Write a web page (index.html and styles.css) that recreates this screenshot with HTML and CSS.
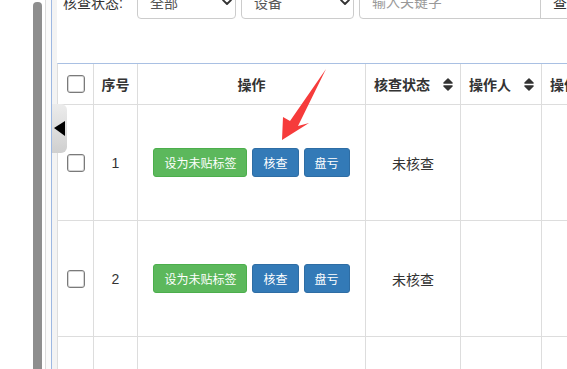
FILE: index.html
```html
<!DOCTYPE html>
<html lang="zh-CN">
<head>
    <meta charset="UTF-8">
    <meta name="viewport" content="width=device-width, initial-scale=1.0">
    <link rel="stylesheet" href="styles.css">
</head>
<body>

    <div class="page">
        <div class="rail">
            <div class="rail-space"></div>
            <div class="scrollbar"></div>
            <div class="rail-gap"></div>
            <div class="rail-line"></div>
            <div class="rail-panel"></div>
            <div class="rail-blue"></div>
            <div class="rail-panel shade"></div>
        </div>

        <div class="main">
            <div class="filters">
                <span class="filter-label">核查状态:</span>
                <div class="select">
                    <span>全部</span>
                    <svg class="chevron" width="10" height="6" viewBox="0 0 10 6"><path d="M1 1 L5 5 L9 1" fill="none" stroke="#333" stroke-width="1.8" stroke-linecap="round" stroke-linejoin="round"/></svg>
                </div>
                <div class="select wide">
                    <span>设备</span>
                    <svg class="chevron" width="10" height="6" viewBox="0 0 10 6"><path d="M1 1 L5 5 L9 1" fill="none" stroke="#333" stroke-width="1.8" stroke-linecap="round" stroke-linejoin="round"/></svg>
                </div>
                <div class="search">
                    <div class="search-input">输入关键字</div>
                    <button class="search-btn">查询</button>
                </div>
            </div>

            <div class="table">
                <div class="row head">
                    <div class="cell"><span class="check"></span></div>
                    <div class="cell">序号</div>
                    <div class="cell">操作</div>
                    <div class="cell sortable">核查状态
                        <svg class="sort" width="12" height="15" viewBox="0 0 12 15"><path d="M2 6 L6 2 L10 6 Z M2 9 L6 13 L10 9 Z" fill="#333" stroke="#333" stroke-width="1.6" stroke-linejoin="round"/></svg>
                    </div>
                    <div class="cell sortable">操作人
                        <svg class="sort" width="12" height="15" viewBox="0 0 12 15"><path d="M2 6 L6 2 L10 6 Z M2 9 L6 13 L10 9 Z" fill="#333" stroke="#333" stroke-width="1.6" stroke-linejoin="round"/></svg>
                    </div>
                    <div class="cell sortable">操作时间</div>
                </div>

                <div class="row">
                    <div class="cell"><span class="check"></span></div>
                    <div class="cell">1</div>
                    <div class="cell actions">
                        <button class="btn green">设为未贴标签</button>
                        <button class="btn blue">核查</button>
                        <button class="btn blue">盘亏</button>
                    </div>
                    <div class="cell">未核查</div>
                    <div class="cell"></div>
                    <div class="cell"></div>
                </div>

                <div class="row">
                    <div class="cell"><span class="check"></span></div>
                    <div class="cell">2</div>
                    <div class="cell actions">
                        <button class="btn green">设为未贴标签</button>
                        <button class="btn blue">核查</button>
                        <button class="btn blue">盘亏</button>
                    </div>
                    <div class="cell">未核查</div>
                    <div class="cell"></div>
                    <div class="cell"></div>
                </div>

                <div class="row">
                    <div class="cell"></div>
                    <div class="cell"></div>
                    <div class="cell"></div>
                    <div class="cell"></div>
                    <div class="cell"></div>
                    <div class="cell"></div>
                </div>
            </div>
        </div>

        <div class="toggle"><span class="toggle-arrow"></span></div>

        <svg class="arrow" width="567" height="369" viewBox="0 0 567 369">
            <polygon points="282,140 283,117 290,121 326,69 298,126 309,123" fill="#f63b3b"/>
        </svg>
    </div>

</body>
</html>
```

FILE: styles.css
```css
* {
    box-sizing: border-box;
}
body {
    margin: 0;
    font-family: "Liberation Sans", "Noto Sans CJK SC", sans-serif;
    font-size: 14px;
    color: #333;
    background-color: #fff;
    overflow: hidden;
}
.page {
    display: flex;
    position: relative;
    height: 369px;
    overflow: hidden;
}

/* left strip with the scrollbar */
.rail {
    display: flex;
    flex: none;
    width: 57px;
}
.rail-space {
    width: 33px;
}
.scrollbar {
    width: 9px;
    margin-top: 2px;
    background-color: #8e8e8e;
    border-radius: 4px 4px 0 0;
}
.rail-gap {
    width: 3px;
}
.rail-line {
    width: 1px;
    background-color: #dcdcdc;
}
.rail-panel {
    width: 5px;
    background-color: #fafafa;
}
.rail-panel.shade {
    background-color: #f3f3f3;
}
.rail-blue {
    width: 1px;
    background-color: #9db8e2;
}

.main {
    flex: 1;
    min-width: 0;
}

/* filter bar */
.filters {
    display: flex;
    align-items: center;
    gap: 5px;
    height: 34px;
    margin-top: -15px;
    padding-left: 6px;
    white-space: nowrap;
}
.filter-label {
    width: 69px;
    flex: none;
}
.select {
    display: flex;
    align-items: center;
    justify-content: space-between;
    flex: none;
    width: 99px;
    height: 34px;
    padding: 0 3px 0 12px;
    border: 1px solid #ccc;
    border-radius: 4px;
    color: #555;
}
.select.wide {
    width: 113px;
}
.search {
    display: flex;
    flex: none;
}
.search-input {
    width: 182px;
    height: 34px;
    padding: 0 12px;
    line-height: 32px;
    border: 1px solid #ccc;
    border-radius: 4px 0 0 4px;
    color: #999;
}
.search-btn {
    height: 34px;
    margin-left: -1px;
    padding: 0 12px;
    border: 1px solid #ccc;
    background-color: #fff;
    font-family: inherit;
    font-size: 14px;
    color: #333;
}

/* table */
.table {
    width: 640px;
    margin-top: 44px;
    border-top: 1px solid #a9c0e3;
    border-left: 1px solid #ddd;
}
.row {
    display: grid;
    grid-template-columns: 36px 44px 228px 95px 81px 156px;
    height: 116px;
}
.row.head {
    height: 41px;
    font-weight: bold;
}
.cell {
    display: flex;
    align-items: center;
    justify-content: center;
    border-right: 1px solid #ddd;
    border-bottom: 1px solid #ddd;
    white-space: nowrap;
}
.cell.sortable {
    justify-content: space-between;
    padding: 0 6px 0 8px;
}
.sort {
    flex: none;
}
.check {
    display: block;
    width: 18px;
    height: 18px;
    border: 1px solid #7a7a7a;
    border-radius: 3px;
    box-shadow: inset 0 0 0 1px #d6d6d6;
    background-color: #fff;
}
.actions {
    gap: 5px;
}
.btn {
    height: 29px;
    padding: 0 10px;
    border: 1px solid transparent;
    border-radius: 3px;
    font-family: inherit;
    font-size: 12px;
    color: #fff;
}
.btn.green {
    background-color: #5cb85c;
    border-color: #4cae4c;
}
.btn.blue {
    background-color: #337ab7;
    border-color: #2e6da4;
}

/* overlays */
.toggle {
    position: absolute;
    left: 52px;
    top: 104px;
    width: 15px;
    height: 49px;
    display: flex;
    align-items: center;
    justify-content: center;
    background: linear-gradient(#ececec, #cfcfcf);
    border-radius: 0 6px 6px 0;
}
.toggle-arrow {
    width: 0;
    height: 0;
    border-top: 7px solid transparent;
    border-bottom: 8px solid transparent;
    border-right: 11px solid #000;
}
.arrow {
    position: absolute;
    left: 0;
    top: 0;
    pointer-events: none;
}
```
